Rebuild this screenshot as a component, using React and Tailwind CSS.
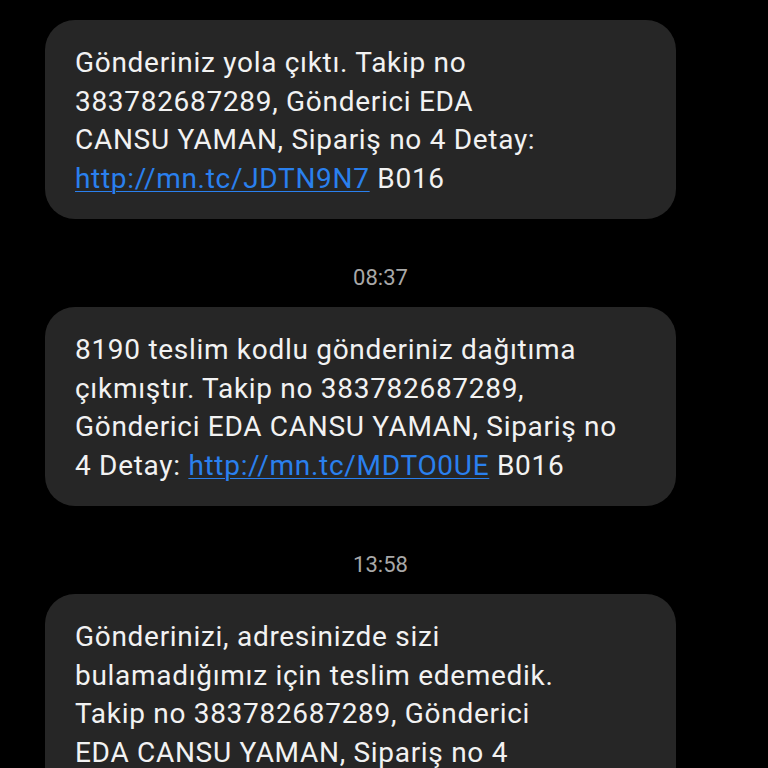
const link = "text-[#2a80ee] underline decoration-1 underline-offset-[3px]";

const messages = [
  {
    lines: [
      "Gönderiniz yola çıktı. Takip no",
      "383782687289, Gönderici EDA",
      "CANSU YAMAN, Sipariş no 4 Detay:",
      <>
        <span className={link}>http://mn.tc/JDTN9N7</span> B016
      </>,
    ],
  },
  {
    time: "08:37",
    lines: [
      "8190 teslim kodlu gönderiniz dağıtıma",
      "çıkmıştır. Takip no 383782687289,",
      "Gönderici EDA CANSU YAMAN, Sipariş no",
      <>
        4 Detay: <span className={link}>http://mn.tc/MDTO0UE</span> B016
      </>,
    ],
  },
  {
    time: "13:58",
    lines: [
      "Gönderinizi, adresinizde sizi",
      "bulamadığımız için teslim edemedik.",
      "Takip no 383782687289, Gönderici",
      "EDA CANSU YAMAN, Sipariş no 4",
      "Detay: http://mn.tc/",
    ],
  },
];

export default function App() {
  return (
    <div
      className="w-[768px] h-[768px] overflow-hidden bg-black pt-[20px]"
      style={{ fontFamily: "Roboto, 'Noto Sans', sans-serif" }}
    >
      {messages.map((m, i) => (
        <div key={i}>
          {m.time && (
            <div className="h-[88px] flex items-center justify-center pt-[28px] pr-[7px] text-[22px] text-[#a8a8a8]">
              {m.time}
            </div>
          )}
          <div className="ml-[45px] w-[631px] rounded-[30px] bg-[#262626] pl-[30px] pr-[10px] pt-[24px] pb-[21px] text-[28px] leading-[38.5px] text-[#f2f2f2] tracking-[0.7px]">
            {m.lines.map((l, j) => (
              <div key={j} className="whitespace-nowrap">
                {l}
              </div>
            ))}
          </div>
        </div>
      ))}
    </div>
  );
}
